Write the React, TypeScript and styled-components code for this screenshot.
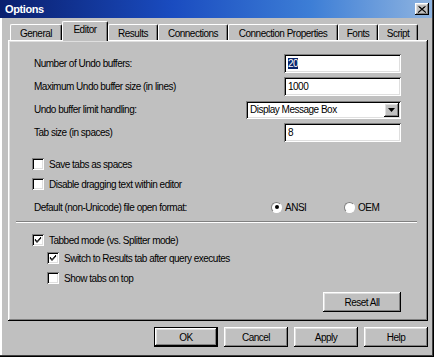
import React from 'react';
import styled, { createGlobalStyle } from 'styled-components';

const GlobalStyle = createGlobalStyle`
  html, body {
    margin: 0;
    padding: 0;
    width: 434px;
    height: 357px;
    overflow: hidden;
    background: #c0c0c0;
  }
  * { box-sizing: border-box; }
`;

const raised = `
  box-shadow: inset -1px -1px #000, inset 1px 1px #fff,
    inset -2px -2px #808080, inset 2px 2px #dfdfdf;
`;
const sunken = `
  box-shadow: inset 1px 1px #808080, inset -1px -1px #fff,
    inset 2px 2px #000, inset -2px -2px #dfdfdf;
`;

const Window = styled.div`
  width: 434px;
  height: 357px;
  background: #c0c0c0;
  display: flex;
  flex-direction: column;
  font-family: 'Liberation Sans', Arial, sans-serif;
  font-size: 10px;
  letter-spacing: -0.5px;
  color: #000;
  box-shadow: inset -1px -1px #000, inset -2px -2px #404040,
    inset 2px 0 #fff;
`;

const TitleBar = styled.div`
  height: 18px;
  margin-right: 2px;
  display: flex;
  align-items: center;
  justify-content: space-between;
  padding: 0 3px 0 5px;
  background: linear-gradient(to right, #0a1f6e 0%, #1a4cc0 40%, #3d7ed6 72%, #8fb4e0 100%);
`;

const Title = styled.span`
  color: #fff;
  font-weight: bold;
  font-size: 11px;
  letter-spacing: -0.4px;
`;

const CloseButton = styled.div`
  width: 14px;
  height: 12px;
  background: #c0c0c0;
  display: flex;
  align-items: center;
  justify-content: center;
  ${raised}
`;

const Body = styled.div`
  flex: 1;
  display: flex;
  flex-direction: column;
  padding: 3px 6px 0 8px;
`;

const TabStrip = styled.div`
  display: flex;
  align-items: flex-end;
  height: 19px;
  padding-left: 2px;
  position: relative;
  z-index: 1;
`;

const Tab = styled.div<{ $w: number; $active?: boolean }>`
  width: ${(p) => p.$w}px;
  height: ${(p) => (p.$active ? 20 : 16)}px;
  margin-bottom: ${(p) => (p.$active ? -1 : 0)}px;
  padding-top: ${(p) => (p.$active ? 2 : 3)}px;
  text-align: center;
  background: #c0c0c0;
  border-top-left-radius: 2px;
  border-top-right-radius: 2px;
  border-top: 1px solid #fff;
  border-left: 1px solid #fff;
  border-right: 1px solid #000;
  box-shadow: inset -1px 0 #808080;
  white-space: nowrap;
`;

const Panel = styled.div`
  height: 281px;
  padding: 14px 27px 0 26px;
  display: flex;
  flex-direction: column;
  ${raised}
`;

const Fields = styled.div`
  display: flex;
  flex-direction: column;
  gap: 4px;
`;

const FieldRow = styled.div`
  height: 19px;
  display: flex;
  align-items: center;
  justify-content: space-between;
`;

const TextBox = styled.div`
  width: 117px;
  height: 19px;
  background: #fff;
  padding: 3px 4px;
  line-height: 13px;
  ${sunken}
`;

const Selected = styled.span`
  background: #0a246a;
  color: #fff;
`;

const Select = styled.div`
  width: 155px;
  height: 18px;
  background: #fff;
  display: flex;
  align-items: center;
  justify-content: space-between;
  padding: 2px 2px 2px 4px;
  ${sunken}
`;

const DropButton = styled.div`
  width: 15px;
  height: 14px;
  background: #c0c0c0;
  display: flex;
  align-items: center;
  justify-content: center;
  ${raised}
`;

const Row = styled.div<{ $top: number; $indent?: number }>`
  height: 16px;
  margin-top: ${(p) => p.$top}px;
  margin-left: ${(p) => (p.$indent ?? 0) - 2}px;
  display: flex;
  align-items: center;
  gap: 5px;
`;

const Box = styled.div`
  width: 12px;
  height: 12px;
  background: #fff;
  display: flex;
  align-items: center;
  justify-content: center;
  ${sunken}
`;

const FormatRow = styled.div`
  height: 16px;
  margin-top: 7px;
  display: grid;
  grid-template-columns: 237px 73px auto;
  align-items: center;
`;

const RadioItem = styled.div`
  display: flex;
  align-items: center;
  gap: 3px;
`;

const Radio = styled.div<{ $on?: boolean }>`
  width: 11px;
  height: 11px;
  border-radius: 50%;
  background: #fff;
  border: 1px solid;
  border-color: #808080 #fff #fff #808080;
  display: flex;
  align-items: center;
  justify-content: center;
  &::after {
    content: '';
    width: 4px;
    height: 4px;
    border-radius: 50%;
    background: ${(p) => (p.$on ? '#000' : 'transparent')};
  }
`;

const Separator = styled.div`
  height: 2px;
  margin: 6px -16px 0 -18px;
  border-top: 1px solid #808080;
  border-bottom: 1px solid #fff;
`;

const ResetRow = styled.div`
  margin-top: 6px;
  display: flex;
  justify-content: flex-end;
`;

const Button = styled.div<{ $w: number; $default?: boolean }>`
  width: ${(p) => p.$w}px;
  height: 20px;
  background: #c0c0c0;
  display: flex;
  align-items: center;
  justify-content: center;
  ${(p) =>
    p.$default
      ? `border: 1px solid #000;
         box-shadow: inset -1px -1px #000, inset 1px 1px #fff,
           inset -2px -2px #808080, inset 2px 2px #dfdfdf;`
      : raised}
`;

const Footer = styled.div`
  margin-top: 6px;
  display: flex;
  justify-content: flex-end;
  gap: 6px;
`;

const Check = () => (
  <svg width="8" height="8" viewBox="0 0 8 8">
    <path d="M1 3 L3 5.5 L7 1 M1 4 L3 6.5 L7 2" stroke="#000" strokeWidth="1" fill="none" />
  </svg>
);

const CheckBox: React.FC<{ checked?: boolean }> = ({ checked }) => (
  <Box>{checked && <Check />}</Box>
);

const tabs = [
  { label: 'General', w: 52 },
  { label: 'Editor', w: 46, active: true },
  { label: 'Results', w: 50 },
  { label: 'Connections', w: 70 },
  { label: 'Connection Properties', w: 110 },
  { label: 'Fonts', w: 40 },
  { label: 'Script', w: 40 },
];

export default function App() {
  return (
    <>
      <GlobalStyle />
      <Window>
        <TitleBar>
          <Title>Options</Title>
          <CloseButton>
            <svg width="8" height="7" viewBox="0 0 8 7">
              <path d="M0.5 0.5 L7.5 6.5 M7.5 0.5 L0.5 6.5 M1.5 0.5 L8 6.5 M6.5 0.5 L0 6.5" stroke="#000" strokeWidth="1" />
            </svg>
          </CloseButton>
        </TitleBar>
        <Body>
          <TabStrip>
            {tabs.map((t) => (
              <Tab key={t.label} $w={t.w} $active={t.active}>
                {t.label}
              </Tab>
            ))}
          </TabStrip>
          <Panel>
            <Fields>
              <FieldRow>
                <span>Number of Undo buffers:</span>
                <TextBox>
                  <Selected>20</Selected>
                </TextBox>
              </FieldRow>
              <FieldRow>
                <span>Maximum Undo buffer size (in lines)</span>
                <TextBox>1000</TextBox>
              </FieldRow>
              <FieldRow>
                <span>Undo buffer limit handling:</span>
                <Select>
                  <span>Display Message Box</span>
                  <DropButton>
                    <svg width="7" height="4" viewBox="0 0 7 4">
                      <path d="M0 0 H7 L3.5 4 Z" fill="#000" />
                    </svg>
                  </DropButton>
                </Select>
              </FieldRow>
              <FieldRow>
                <span>Tab size (in spaces)</span>
                <TextBox>8</TextBox>
              </FieldRow>
            </Fields>

            <Row $top={14}>
              <CheckBox />
              <span>Save tabs as spaces</span>
            </Row>
            <Row $top={4}>
              <CheckBox />
              <span>Disable dragging text within editor</span>
            </Row>
            <FormatRow>
              <span>Default (non-Unicode) file open format:</span>
              <RadioItem>
                <Radio $on />
                <span>ANSI</span>
              </RadioItem>
              <RadioItem>
                <Radio />
                <span>OEM</span>
              </RadioItem>
            </FormatRow>
            <Separator />
            <Row $top={9}>
              <CheckBox checked />
              <span>Tabbed mode (vs. Splitter mode)</span>
            </Row>
            <Row $top={2} $indent={15}>
              <CheckBox checked />
              <span>Switch to Results tab after query executes</span>
            </Row>
            <Row $top={4} $indent={15}>
              <CheckBox />
              <span>Show tabs on top</span>
            </Row>
            <ResetRow>
              <Button $w={78}>Reset All</Button>
            </ResetRow>
          </Panel>
          <Footer>
            <Button $w={64} $default>OK</Button>
            <Button $w={64}>Cancel</Button>
            <Button $w={64}>Apply</Button>
            <Button $w={64}>Help</Button>
          </Footer>
        </Body>
      </Window>
    </>
  );
}
